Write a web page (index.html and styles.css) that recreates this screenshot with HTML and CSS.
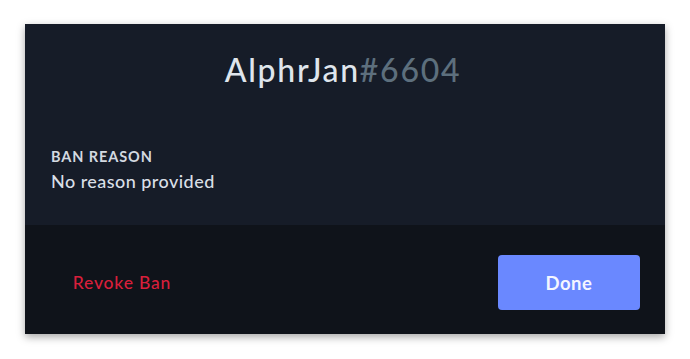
FILE: index.html
```html
<!DOCTYPE html>
<html lang="en">
<head>
<meta charset="utf-8">
<title>Ban details</title>
<link rel="stylesheet" href="styles.css">
</head>
<body>
<div class="modal">
  <div class="modal-body">
    <h1 class="title"><span class="name">AlphrJan</span><span class="tag">#6604</span></h1>
    <div class="label">BAN REASON</div>
    <div class="reason">No reason provided</div>
  </div>
  <div class="modal-footer">
    <button class="btn btn-link">Revoke Ban</button>
    <button class="btn btn-primary">Done</button>
  </div>
</div>
</body>
</html>
```
FILE: styles.css
```css
html, body {
  margin: 0;
  background: #ffffff;
}
body {
  padding: 24px 25px;
  font-family: Lato, "Noto Sans", sans-serif;
}
.modal {
  width: 640px;
  height: 310px;
  display: flex;
  flex-direction: column;
  background: #161c28;
  box-shadow: 0 3px 8px rgba(0, 0, 0, 0.35);
}
.modal-body {
  flex: 1;
  padding: 27px 26px 0;
}
.title {
  margin: 0;
  text-align: center;
  font-size: 32px;
  line-height: 38px;
  font-weight: 500;
  letter-spacing: 1.7px;
  color: #dfe5ec;
  padding-right: 4px;
}
.tag {
  color: #5d6f7d;
}
.label {
  margin-top: 59px;
  font-size: 14.5px;
  line-height: 18px;
  font-weight: 700;
  letter-spacing: 0.9px;
  color: #d3d9e0;
}
.reason {
  margin-top: 3px;
  font-size: 18px;
  line-height: 24px;
  font-weight: 500;
  letter-spacing: 0.45px;
  color: #d9dfe6;
}
.modal-footer {
  height: 109px;
  box-sizing: border-box;
  padding: 30px 25px 24px 26px;
  background: #0f131a;
  display: flex;
  align-items: center;
  justify-content: space-between;
}
.btn {
  width: 142px;
  height: 55px;
  border: 0;
  border-radius: 4px;
  font-family: Lato, "Noto Sans", sans-serif;
  cursor: pointer;
}
.btn-link {
  background: transparent;
  color: #d81f3b;
  font-size: 17.5px;
  font-weight: 500;
  letter-spacing: 0.8px;
}
.btn-primary {
  background: #6a88ff;
  color: #f4f6ff;
  font-size: 18.5px;
  font-weight: 700;
  letter-spacing: 0.5px;
}
```
